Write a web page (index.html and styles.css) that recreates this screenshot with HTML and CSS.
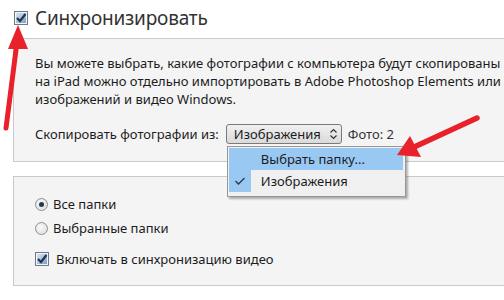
FILE: index.html
```html
<!DOCTYPE html>
<html>
<head>
<meta charset="utf-8">
<link rel="stylesheet" href="styles.css">
</head>
<body>
<div class="page">
  <div class="header">
    <svg class="cb" width="14" height="14" viewBox="0 0 14 14">
      <defs><linearGradient id="g1" x1="0" y1="0" x2="1" y2="1"><stop offset="0" stop-color="#d9e6f4"/><stop offset="1" stop-color="#7f9fc4"/></linearGradient></defs>
      <rect x="0.5" y="0.5" width="13" height="13" fill="#f4f4f4" stroke="#6b7b8c"/>
      <rect x="2" y="2" width="10" height="10" fill="url(#g1)"/>
      <path d="M3 7 L6 10 L11.5 3" fill="none" stroke="#1f3552" stroke-width="2.2"/>
    </svg>
    <span class="title">Синхронизировать</span>
  </div>

  <div class="panel p1">
    <p class="desc">Вы можете выбрать, какие фотографии с компьютера будут скопированы<br>на iPad можно отдельно импортировать в Adobe Photoshop Elements или<br>изображений и видео Windows.</p>
    <div class="row">
      <span class="lbl">Скопировать фотографии из:</span>
      <div class="selwrap">
        <div class="select"><span>Изображения</span>
          <svg width="9" height="12" viewBox="0 0 9 12"><path d="M1.5 4.5 L4.5 1.5 L7.5 4.5 M1.5 7.5 L4.5 10.5 L7.5 7.5" fill="none" stroke="#333" stroke-width="1.2"/></svg>
        </div>
        <div class="menu">
          <div class="item hl"><span class="mark"></span><span>Выбрать папку...</span></div>
          <div class="item"><span class="mark on"><svg width="12" height="10" viewBox="0 0 12 10"><path d="M1.5 5 L4.5 8 L10.5 2" fill="none" stroke="#2b3a4a" stroke-width="1.4"/></svg></span><span>Изображения</span></div>
        </div>
      </div>
      <span class="count">Фото: 2</span>
    </div>
  </div>

  <div class="panel p2">
    <div class="opt r1"><span class="radio sel"></span><span>Все папки</span></div>
    <div class="opt r2"><span class="radio"></span><span>Выбранные папки</span></div>
    <div class="opt r3">
      <svg class="cb" width="14" height="14" viewBox="0 0 14 14">
        <defs><linearGradient id="g2" x1="0" y1="0" x2="1" y2="1"><stop offset="0" stop-color="#d9e6f4"/><stop offset="1" stop-color="#7f9fc4"/></linearGradient></defs>
        <rect x="0.5" y="0.5" width="13" height="13" fill="#f4f4f4" stroke="#6b7b8c"/>
        <rect x="2" y="2" width="10" height="10" fill="url(#g2)"/>
        <path d="M3 7 L6 10 L11.5 3" fill="none" stroke="#1f3552" stroke-width="2.2"/>
      </svg>
      <span>Включать в синхронизацию видео</span>
    </div>
  </div>

  <svg class="arrows" width="504" height="300" viewBox="0 0 504 300">
    <path d="M6 128 L16.5 46" stroke="#e8212b" stroke-width="5" stroke-linecap="round" fill="none"/>
    <polygon points="18,25 8,49 28,49" fill="#e8212b"/>
    <path d="M477 118 L412 148" stroke="#e8212b" stroke-width="5.5" stroke-linecap="round" fill="none"/>
    <polygon points="397,155 410,136 421,157" fill="#e8212b"/>
  </svg>
</div>
</body>
</html>
```

FILE: styles.css
```css
* { box-sizing: border-box; }
html, body { margin: 0; padding: 0; background: #fff; }
.page {
  position: relative;
  width: 504px;
  height: 300px;
  overflow: hidden;
  font-family: "Noto Sans", "Open Sans", sans-serif;
  font-size: 13px;
  color: #1c1c1c;
}
.header {
  height: 38px;
  display: flex;
  align-items: center;
  padding-left: 14px;
}
.header .cb { margin-top: -2px; }
.title {
  font-size: 19px;
  color: #333;
  margin-left: 7px;
  margin-top: -2px;
  letter-spacing: -0.2px;
}
.panel {
  margin-left: 13px;
  width: 520px;
  background: #f4f4f4;
  border: 1px solid #c9c9c9;
  border-right: none;
  padding-left: 21px;
}
.p1 { padding-top: 15px; padding-bottom: 17px; }
.desc {
  margin: 0;
  line-height: 18px;
  white-space: nowrap;
}
.row {
  margin-top: 16px;
  height: 20px;
  display: flex;
  align-items: center;
}
.selwrap { position: relative; margin-left: 7px; }
.select {
  width: 116px;
  height: 20px;
  border: 1px solid #7a7a7a;
  border-radius: 3px;
  background: linear-gradient(#f0f0f0, #dadada);
  display: flex;
  align-items: center;
  justify-content: space-between;
  padding: 0 3px 0 7px;
}
.count { margin-left: 6px; color: #333; }
.menu {
  position: absolute;
  left: 1px;
  top: 22px;
  width: 179px;
  height: 51px;
  background: #f0f0f0;
  border: 1px solid #979797;
  box-shadow: 2px 2px 2px rgba(0,0,0,0.3);
  padding: 1px;
  z-index: 2;
}
.item {
  height: 22px;
  display: flex;
  align-items: center;
}
.item.hl { background: #99c9f3; margin-right: 1px; }
.mark {
  width: 22px;
  height: 22px;
  margin-right: 10px;
  display: flex;
  align-items: center;
  justify-content: center;
}
.mark.on { background: #99c9f3; }
.p2 { margin-top: 14px; padding-top: 18px; padding-bottom: 17px; }
.opt {
  height: 18px;
  display: flex;
  align-items: center;
}
.r2 { margin-top: 6px; }
.r3 { margin-top: 13px; }
.radio {
  width: 13px;
  height: 13px;
  border-radius: 50%;
  border: 1px solid #8e8f8f;
  background: radial-gradient(circle at 40% 40%, #fafafa, #d8d8d8);
  margin-right: 5px;
  display: flex;
  align-items: center;
  justify-content: center;
}
.radio.sel::after {
  content: "";
  width: 5px;
  height: 5px;
  border-radius: 50%;
  background: #23364f;
}
.r3 .cb { margin-right: 7px; }
.arrows {
  position: absolute;
  left: 0;
  top: 0;
  pointer-events: none;
  z-index: 3;
}
```
